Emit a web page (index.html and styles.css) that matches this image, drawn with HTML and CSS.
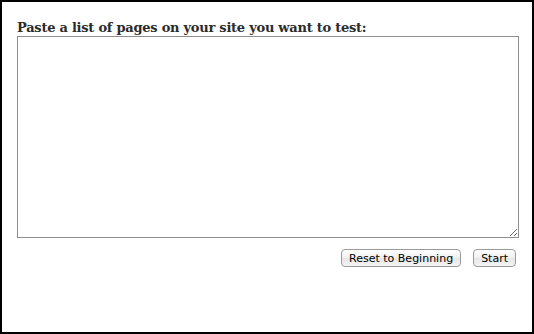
FILE: index.html
```html
<!DOCTYPE html>
<html>

   <head>
      <title>Page Tester</title>
      <meta charset="utf-8">
      <meta name="viewport" content="width=device-width, initial-scale=1.0">
      <link rel="stylesheet" href="styles.css">
   </head>

   <body>
      <div class="panel">
         <label class="prompt" for="taPages">Paste a list of pages on your site you want to test:</label>
         <textarea id="taPages" class="pages"></textarea>
         <div class="actions">
            <button id="btnReset" class="btn">Reset to Beginning</button>
            <button id="btnStart" class="btn">Start</button>
         </div>
      </div>
   </body>

</html>
```

FILE: styles.css
```css
html,
body {
   margin: 0;
   height: 100%;
}

body {
   background-color: #ffffff;
   border: 2px solid #000000;
   box-sizing: border-box;
}

.panel {
   padding: 17px 13px 0 15px;
}

.prompt {
   display: block;
   font-family: "DejaVu Serif", Georgia, serif;
   font-weight: bold;
   font-size: 13px;
   line-height: 17px;
   color: #2b2b2b;
   letter-spacing: -0.25px;
}

.pages {
   display: block;
   width: 502px;
   height: 202px;
   box-sizing: border-box;
   margin: 0;
   border: 1px solid #8f8f8f;
   background-color: #ffffff;
}

.actions {
   display: flex;
   justify-content: flex-end;
   gap: 12px;
   padding-right: 3px;
   margin-top: 11px;
}

.btn {
   font-family: "DejaVu Sans", Arial, sans-serif;
   font-size: 11px;
   height: 18px;
   padding: 0 7px;
   color: #000000;
   border: 1px solid #9a9a9a;
   border-radius: 4px;
   background: linear-gradient(#ffffff, #f0f0f0 50%, #e6e6e6 51%, #f4f4f4);
}
```
